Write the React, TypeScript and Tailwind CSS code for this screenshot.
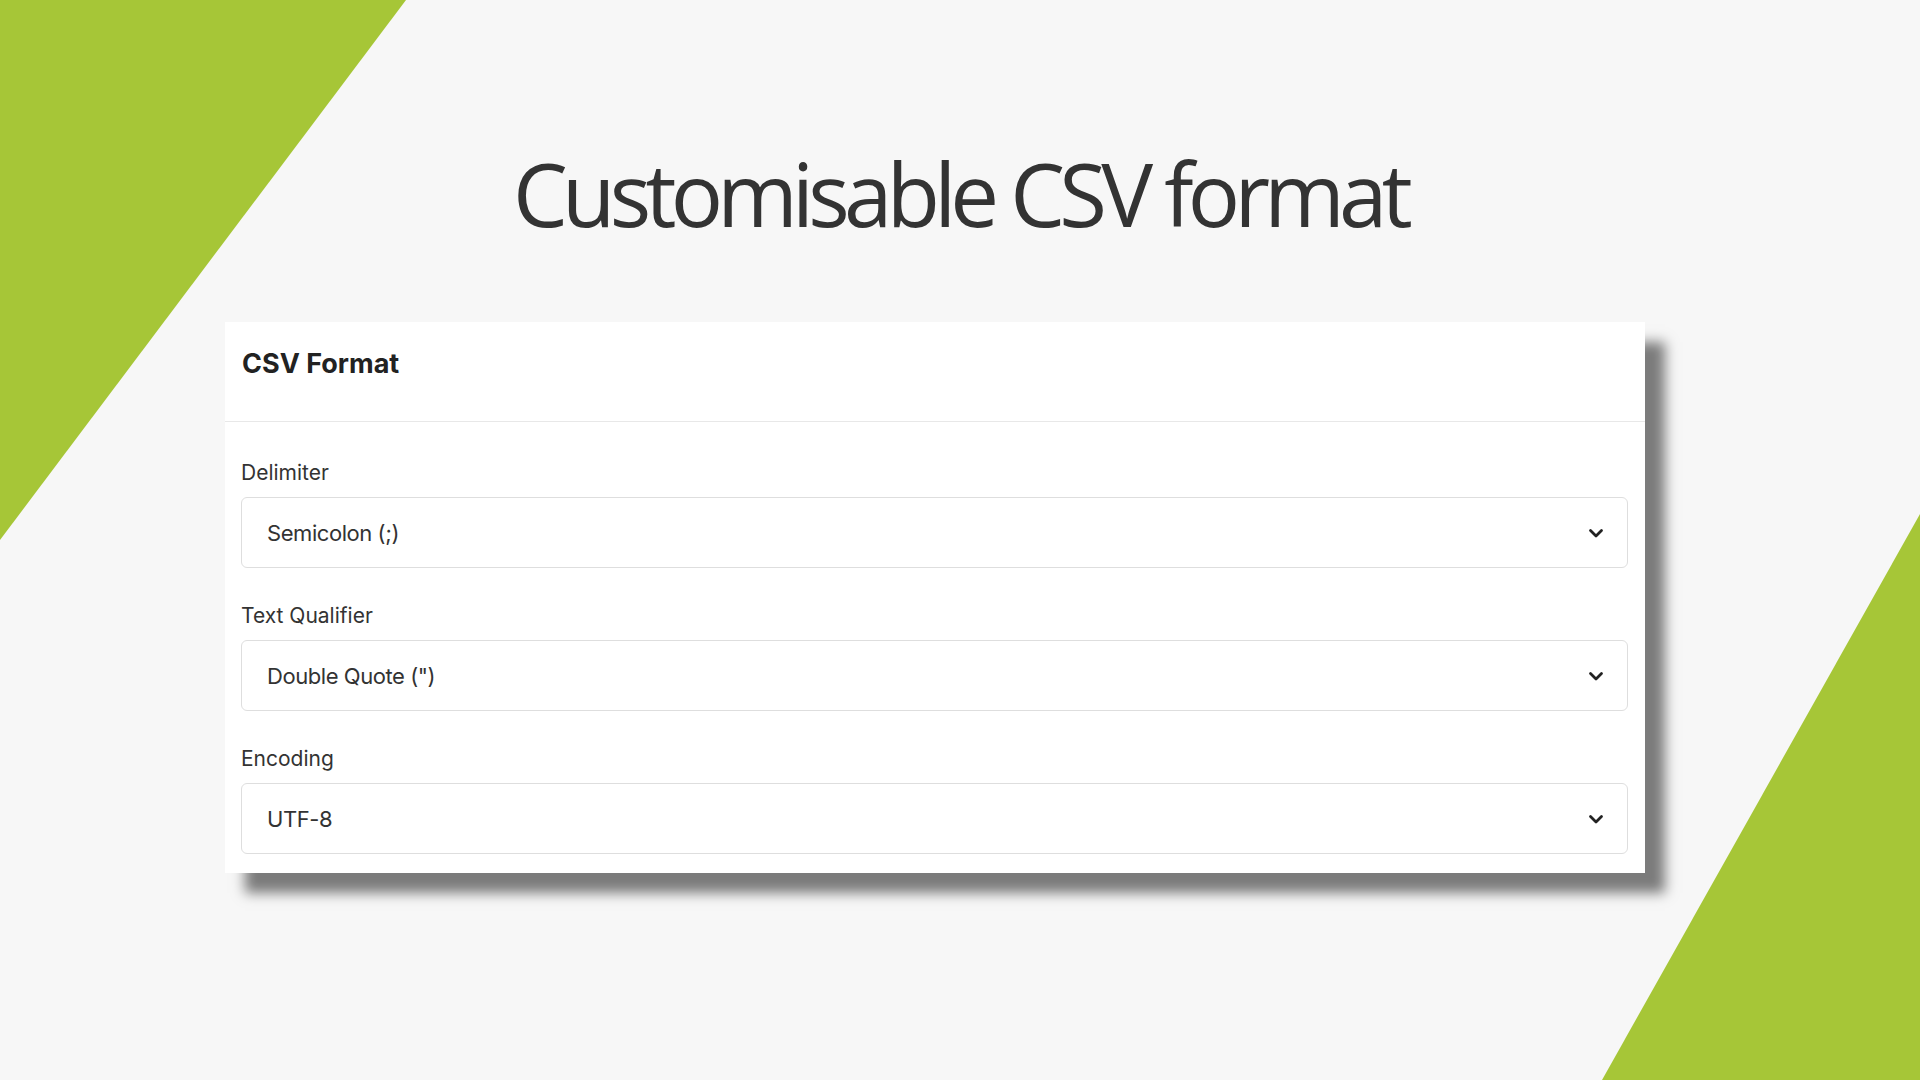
import React from 'react';

type Field = {
  label: string;
  value: string;
};

const fields: Field[] = [
  { label: 'Delimiter', value: 'Semicolon (;)' },
  { label: 'Text Qualifier', value: 'Double Quote (")' },
  { label: 'Encoding', value: 'UTF-8' },
];

const Chevron = () => (
  <svg width="18" height="18" viewBox="0 0 18 18" fill="none" className="shrink-0">
    <path d="M3.5 6.5 L9 12 L14.5 6.5" stroke="#222" strokeWidth="2.8" strokeLinecap="round" strokeLinejoin="round" />
  </svg>
);

const SelectField: React.FC<{ field: Field; first?: boolean }> = ({ field, first }) => (
  <div className={first ? '' : 'mt-[37px]'}>
    <div className="text-[21px] leading-none text-[#333]">{field.label}</div>
    <div className="mt-[14px] h-[71px] flex items-center justify-between border border-[#dedede] rounded-[6px] bg-white pl-[25px] pr-[22px]">
      <span className="text-[22px] leading-none tracking-[-0.02em] text-[#333]">{field.value}</span>
      <Chevron />
    </div>
  </div>
);

export default function App() {
  return (
    <div className="relative w-[1920px] h-[1080px] overflow-hidden bg-[#f7f7f7]">
      {/* decorative corner shapes */}
      <svg className="absolute inset-0" width="1920" height="1080" viewBox="0 0 1920 1080">
        <polygon points="0,0 406,0 0,540" fill="#a6c637" />
        <polygon points="1920,514 1920,1080 1602,1080" fill="#a6c637" />
      </svg>

      <div className="relative flex flex-col">
        <h1
          className="pt-[150px] text-center text-[87px] leading-none text-[#333] tracking-[-0.066em]"
          style={{ fontFamily: '"Open Sans", "Liberation Sans", sans-serif' }}
        >
          Customisable CSV format
        </h1>

        <div
          className="mt-[85px] ml-[225px] w-[1420px] bg-white shadow-[20px_20px_12px_rgba(0,0,0,0.5)]"
          style={{ fontFamily: 'Inter, "Liberation Sans", sans-serif' }}
        >
          <div className="px-[17px] pt-[28px] pb-[44px] border-b border-[#e8e8e8]">
            <div className="text-[27px] leading-none font-bold text-[#222]">CSV Format</div>
          </div>
          <div className="pl-[16px] pr-[17px] pt-[40px] pb-[19px]">
            {fields.map((f, i) => (
              <SelectField key={f.label} field={f} first={i === 0} />
            ))}
          </div>
        </div>
      </div>
    </div>
  );
}
